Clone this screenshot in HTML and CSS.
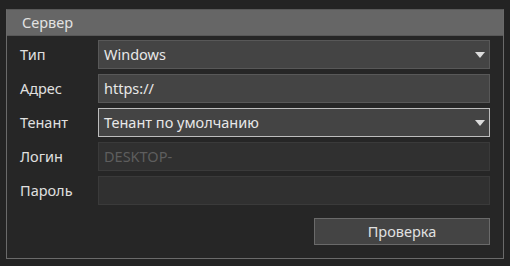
FILE: index.html
```html
<!DOCTYPE html>
<html lang="ru">
<head>
<meta charset="utf-8">
<link rel="stylesheet" href="styles.css">
</head>
<body>
<div class="panel">
  <div class="header">Сервер</div>
  <div class="form">
    <div class="label">Тип</div>
    <div class="field select">
      <span>Windows</span>
      <svg class="arrow" width="10" height="6" viewBox="0 0 10 6"><path d="M0 0H10L5 6Z" fill="#dcdcdc"/></svg>
    </div>
    <div class="label">Адрес</div>
    <div class="field">https://</div>
    <div class="label">Тенант</div>
    <div class="field select focused">
      <span>Тенант по умолчанию</span>
      <svg class="arrow" width="10" height="6" viewBox="0 0 10 6"><path d="M0 0H10L5 6Z" fill="#dcdcdc"/></svg>
    </div>
    <div class="label">Логин</div>
    <div class="field disabled">DESKTOP-</div>
    <div class="label">Пароль</div>
    <div class="field disabled"></div>
  </div>
  <div class="actions">
    <div class="button">Проверка</div>
  </div>
</div>
</body>
</html>
```

FILE: styles.css
```css
html, body {
  margin: 0;
  padding: 0;
  background: #232323;
  font-family: "Noto Sans", "Open Sans", sans-serif;
  font-size: 14.5px;
  color: #dedede;
}
body {
  padding: 9px 6px 0 6px;
}
.panel {
  box-sizing: border-box;
  width: 498px;
  height: 250px;
  border: 1px solid #6a6a6a;
  border-top-color: #585858;
  background: #262626;
}
.header {
  box-sizing: border-box;
  height: 26px;
  background: #666666;
  border-bottom: 1px solid #585858;
  padding-left: 15px;
  line-height: 25px;
  color: #e2e2e2;
}
.form {
  display: grid;
  grid-template-columns: 78px 392px;
  grid-auto-rows: 29px;
  row-gap: 5px;
  padding: 4px 13px 0 13px;
}
.label {
  line-height: 29px;
  color: #e0e0e0;
}
.field {
  box-sizing: border-box;
  height: 29px;
  background: #444444;
  border: 1px solid #585858;
  padding: 0 5px;
  line-height: 27px;
  color: #e8e8e8;
  display: flex;
  align-items: center;
  justify-content: space-between;
}
.field.focused {
  border-color: #bdbdbd;
}
.field.disabled {
  background: #303030;
  border-color: #3a3a3a;
  color: #5e5e5e;
}
.arrow {
  margin-right: -1px;
}
.actions {
  display: flex;
  justify-content: flex-end;
  padding: 13px 13px 0 0;
}
.button {
  box-sizing: border-box;
  width: 176px;
  height: 27px;
  background: #444444;
  border: 1px solid #6a6a6a;
  text-align: center;
  line-height: 25px;
  color: #e0e0e0;
}
```
